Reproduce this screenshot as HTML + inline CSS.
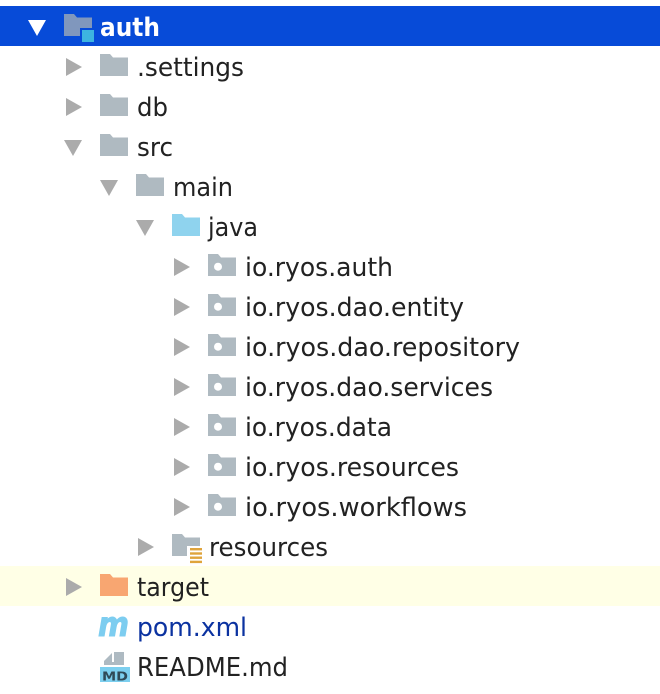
<!DOCTYPE html>
<html><head><meta charset="utf-8">
<style>
html,body{margin:0;padding:0;background:#fff;width:660px;height:694px;overflow:hidden}
svg{display:block}
text{font-family:"DejaVu Sans","Liberation Sans",sans-serif;font-size:25.5px;fill:#222}
</style></head>
<body>
<svg width="660" height="694" viewBox="0 0 660 694" xmlns="http://www.w3.org/2000/svg">
<defs>
<path id="f" d="M0 0H10L13 3.5H28V22H0Z"/>
<path id="r" d="M0 0L16 9L0 18Z" fill="#ababab"/>
<path id="d" d="M0 0H18L9 16Z" fill="#ababab"/>
<g id="p"><use href="#f" fill="#afbac1"/><circle cx="10" cy="12.7" r="4" fill="#fff"/></g>
</defs>
<rect x="0" y="6" width="660" height="40" fill="#074bd8"/>
<rect x="0" y="566" width="660" height="40" fill="#ffffe6"/>

<!-- auth -->
<path d="M28 20H46L37 36Z" fill="#fff"/>
<use href="#f" x="64" y="14" fill="#8097bd"/>
<rect x="80" y="28" width="16" height="16" fill="#074bd8"/>
<rect x="82" y="30" width="12" height="12" fill="#3db4e0"/>
<text x="100" y="36" textLength="60" lengthAdjust="spacingAndGlyphs" style="fill:#fff;font-weight:bold">auth</text>

<!-- .settings -->
<use href="#r" x="66" y="58"/><use href="#f" x="100" y="54" fill="#afbac1"/>
<text x="137" y="76" textLength="107" lengthAdjust="spacingAndGlyphs">.settings</text>
<!-- db -->
<use href="#r" x="66" y="98"/><use href="#f" x="100" y="94" fill="#afbac1"/>
<text x="137" y="116" textLength="31" lengthAdjust="spacingAndGlyphs">db</text>
<!-- src -->
<use href="#d" x="64" y="140"/><use href="#f" x="100" y="134" fill="#afbac1"/>
<text x="137" y="156" textLength="36" lengthAdjust="spacingAndGlyphs">src</text>
<!-- main -->
<use href="#d" x="100" y="180"/><use href="#f" x="136" y="174" fill="#afbac1"/>
<text x="173" y="196" textLength="60" lengthAdjust="spacingAndGlyphs">main</text>
<!-- java -->
<use href="#d" x="136" y="220"/><use href="#f" x="172" y="214" fill="#8fd3ee"/>
<text x="208" y="236" textLength="50" lengthAdjust="spacingAndGlyphs">java</text>

<!-- packages -->
<use href="#r" x="174" y="258"/><use href="#p" x="208" y="254"/>
<text x="245" y="276" textLength="148" lengthAdjust="spacingAndGlyphs">io.ryos.auth</text>
<use href="#r" x="174" y="298"/><use href="#p" x="208" y="294"/>
<text x="245" y="316" textLength="219" lengthAdjust="spacingAndGlyphs">io.ryos.dao.entity</text>
<use href="#r" x="174" y="338"/><use href="#p" x="208" y="334"/>
<text x="245" y="356" textLength="275" lengthAdjust="spacingAndGlyphs">io.ryos.dao.repository</text>
<use href="#r" x="174" y="378"/><use href="#p" x="208" y="374"/>
<text x="245" y="396" textLength="248" lengthAdjust="spacingAndGlyphs">io.ryos.dao.services</text>
<use href="#r" x="174" y="418"/><use href="#p" x="208" y="414"/>
<text x="245" y="436" textLength="147" lengthAdjust="spacingAndGlyphs">io.ryos.data</text>
<use href="#r" x="174" y="458"/><use href="#p" x="208" y="454"/>
<text x="245" y="476" textLength="214" lengthAdjust="spacingAndGlyphs">io.ryos.resources</text>
<use href="#r" x="174" y="498"/><use href="#p" x="208" y="494"/>
<text x="245" y="516" textLength="222" lengthAdjust="spacingAndGlyphs">io.ryos.workflows</text>

<!-- resources -->
<use href="#r" x="138" y="538"/><use href="#f" x="172" y="534" fill="#afbac1"/>
<rect x="187" y="546" width="16" height="18" fill="#fff"/>
<g fill="#dfa43c"><rect x="190" y="548" width="12" height="2.4"/><rect x="190" y="552.3" width="12" height="2.4"/><rect x="190" y="556.5" width="12" height="2.4"/><rect x="190" y="560.7" width="12" height="2.4"/></g>
<text x="209" y="556" textLength="119" lengthAdjust="spacingAndGlyphs">resources</text>

<!-- target -->
<use href="#r" x="66" y="578"/><use href="#f" x="100" y="574" fill="#f8a671"/>
<text x="137" y="596" textLength="72" lengthAdjust="spacingAndGlyphs">target</text>

<!-- pom -->
<text x="98" y="636" textLength="31" lengthAdjust="spacingAndGlyphs" style="fill:#7dcdf0;stroke:#7dcdf0;stroke-width:1;font-weight:bold;font-style:italic;font-size:34px">m</text>
<text x="137" y="636" textLength="110" lengthAdjust="spacingAndGlyphs" style="fill:#0b32a0">pom.xml</text>

<!-- README -->
<path d="M104 665V661L112 653V662H114V652H124V665Z" fill="#aebac2"/>
<rect x="100" y="667" width="30" height="15" fill="#7ccfef"/>
<text x="102" y="680.5" textLength="26" lengthAdjust="spacingAndGlyphs" style="fill:#2f4a58;font-weight:bold;font-size:12px">MD</text>
<text x="137" y="676" textLength="151" lengthAdjust="spacingAndGlyphs">README.md</text>
</svg>
</body></html>
